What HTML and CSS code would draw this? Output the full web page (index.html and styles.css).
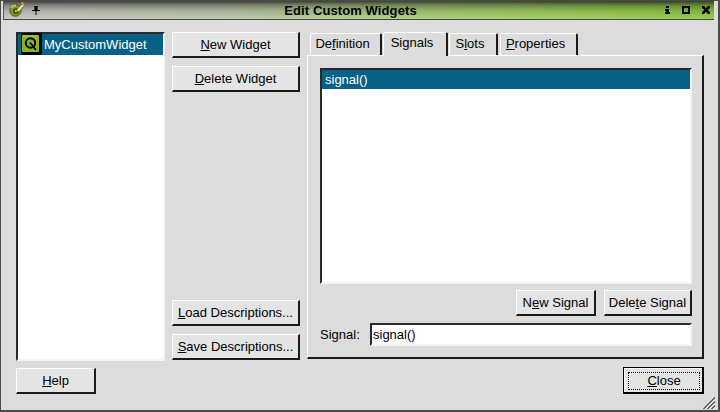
FILE: index.html
```html
<!DOCTYPE html>
<html lang="en">
<head>
<meta charset="utf-8">
<title>Edit Custom Widgets</title>
<link rel="stylesheet" href="styles.css">
</head>
<body>
<div class="window">
  <div class="titlebar">
    <svg class="app-icon" width="22" height="18" viewBox="0 0 22 18">
      <circle cx="8.500" cy="9.500" r="5.700" fill="#7f9f20" stroke="#44581a" stroke-width="1"/>
      <path d="M4 7A5 5 0 0 1 9 4.500" stroke="#c6dc6a" stroke-width="1.500" fill="none"/>
      <circle cx="9" cy="10" r="2.200" fill="#a8c040" stroke="#2c3a0c" stroke-width="1.300"/>
      <path d="M9.500 9L15 3L17.500 4.500L11.500 11Z" fill="#f2e6b0" stroke="#4a3a10" stroke-width=".6"/>
      <path d="M13.500 2.500L15.500 1L17.500 2.500L16 4Z" fill="#d8a020"/>
    </svg>
    <svg class="pin" width="8" height="9" viewBox="0 0 8 9">
      <path d="M2 0H6V1H5.500V4H8V5H4.500V9H3.500V5H0V4H2.500V1H2Z" fill="#000"/>
    </svg>
    <span class="title">Edit Custom Widgets</span>
    <div class="winbtns">
      <svg width="5" height="8" viewBox="0 0 5 8"><path d="M1 0H4V2H1ZM0 3H4V6H5V8H0V6H1V5H0Z" fill="#000"/></svg>
      <svg width="8" height="8" viewBox="0 0 8 8"><path d="M0 0H8V8H0ZM2 2V6H6V2Z" fill="#000" fill-rule="evenodd"/></svg>
      <svg width="8" height="8" viewBox="0 0 8 8"><path d="M0 0H2L4 2.300L6 0H8V2L5.700 4L8 6V8H6L4 5.700L2 8H0V6L2.300 4L0 2Z" fill="#000"/></svg>
    </div>
  </div>
  <div class="body">
    <div class="main">
      <div class="widget-list sunken">
        <div class="row selected">
          <svg class="qt" width="21" height="22" viewBox="0 0 21 22">
            <rect x="0" y="0" width="21" height="22" rx="2" fill="#000"/>
            <rect x="1" y="2" width="17" height="17" rx="1" fill="#8fb31a"/>
            <path d="M2 3H16" stroke="#b8d050" stroke-width="1"/>
            <circle cx="9.500" cy="10" r="4.700" fill="none" stroke="#000" stroke-width="2"/>
            <path d="M9 9.500L15 17" stroke="#000" stroke-width="2"/>
          </svg>
          <span class="row-text">MyCustomWidget</span>
        </div>
      </div>
      <div class="side-buttons">
        <button class="btn"><u>N</u>ew Widget</button>
        <button class="btn"><u>D</u>elete Widget</button>
        <div class="spacer"></div>
        <button class="btn"><u>L</u>oad Descriptions...</button>
        <button class="btn"><u>S</u>ave Descriptions...</button>
      </div>
      <div class="tabs">
        <div class="tabbar">
          <div class="tab tab-def">De<u>f</u>inition</div>
          <div class="tab tab-active">Si<u>g</u>nals</div>
          <div class="tab tab-slots">S<u>l</u>ots</div>
          <div class="tab tab-props"><u>P</u>roperties</div>
        </div>
        <div class="pane">
          <div class="signal-list sunken">
            <div class="signal-row">signal()</div>
          </div>
          <div class="signal-actions">
            <button class="btn btn-new">N<u>e</u>w Signal</button>
            <button class="btn btn-del">Dele<u>t</u>e Signal</button>
          </div>
          <div class="signal-field">
            <label class="signal-label">Si<u>g</u>nal:</label>
            <div class="input sunken">signal()</div>
          </div>
        </div>
      </div>
    </div>
    <div class="footer">
      <button class="btn btn-help"><u>H</u>elp</button>
      <button class="btn btn-close"><span class="focus"><u>C</u>lose</span></button>
    </div>
    <svg class="grip" width="14" height="14" viewBox="0 0 14 14">
      <path d="M13 1.500L1.500 13M13 5.500L5.500 13M13 9.500L9.500 13" stroke="#555" stroke-width="1.500" fill="none"/>
      <path d="M13 3.500L3.500 13M13 7.500L7.500 13M13 11.500L11.500 13" stroke="#fff" stroke-width=".9" fill="none"/>
    </svg>
  </div>
</div>
</body>
</html>
```
FILE: styles.css
```css
* { box-sizing: border-box; }
html, body { margin: 0; padding: 0; }
body {
  width: 720px;
  height: 412px;
  overflow: hidden;
  font-family: "Liberation Sans", Arial, sans-serif;
  font-size: 13px;
  color: #000;
  background: #dcdcdc;
}
.window {
  position: relative;
  width: 720px;
  height: 412px;
  display: flex;
  flex-direction: column;
  background: #dcdcdc;
  border: 1px solid #4a4a4a;
  border-right-width: 2px;
  border-bottom-width: 2px;
  padding: 0 2px;
}
.titlebar {
  position: relative;
  flex: none;
  height: 19px;
  margin-right: 2px;
  display: flex;
  align-items: center;
  background:
    linear-gradient(to bottom, rgba(30,30,30,.8) 0, rgba(40,40,40,.4) 25%, rgba(60,60,60,.15) 55%, rgba(255,255,255,.12) 100%),
    linear-gradient(to right, #c4c4c0 0%, #b8c4a8 30%, #a8cc78 55%, #98cc50 80%, #8cc83a 100%);
  border-bottom: 1px solid #444;
  border-left: 1px solid #555;
}
.app-icon { flex: none; margin-left: 3px; }
.pin { flex: none; margin-left: 3px; }
.title {
  position: absolute;
  left: 0;
  right: 0;
  padding-right: 17px;
  text-align: center;
  font-weight: bold;
  font-size: 13px;
  letter-spacing: .1px;
  color: #000;
}
.winbtns {
  position: relative;
  margin-left: auto;
  display: flex;
  align-items: center;
  gap: 12px;
  padding-right: 4px;
}
.body {
  position: relative;
  flex: 1;
  min-height: 0;
  display: flex;
  flex-direction: column;
  padding: 12px 12px 16px 13px;
}
.main {
  flex: none;
  height: 329px;
  display: flex;
}
.sunken {
  background: #fff;
  border: 2px solid;
  border-color: #2a2a2a #f4f4f4 #f4f4f4 #2a2a2a;
}
.widget-list {
  flex: none;
  width: 149px;
}
.row {
  display: flex;
  align-items: center;
  height: 21px;
  padding-left: 3px;
}
.selected { background: #076186; color: #fff; }
.qt { flex: none; margin: -1px 2px 0 0; }
.row-text { margin-bottom: 1px; }
.side-buttons {
  flex: none;
  width: 128px;
  margin-left: 7px;
  padding-bottom: 1px;
  display: flex;
  flex-direction: column;
  gap: 8px;
}
.spacer { flex: 1; }
.btn {
  display: block;
  height: 26px;
  padding: 0;
  font: inherit;
  color: #000;
  background: #e4e4e4;
  border: 1px solid;
  border-color: #fff #1a1a1a #1a1a1a #fff;
  border-width: 1px 2px 2px 1px;
  text-align: center;
}
.tabs {
  flex: 1;
  min-width: 0;
  margin-left: 7px;
  padding-bottom: 2px;
  display: flex;
  flex-direction: column;
}
.tabbar {
  flex: none;
  height: 23px;
  display: flex;
  align-items: flex-end;
  padding-left: 3px;
  gap: 1px;
  position: relative;
  z-index: 1;
}
.tab {
  height: 22px;
  line-height: 20px;
  padding-right: 6px;
  text-align: center;
  background: #dcdcdc;
  border: 1px solid;
  border-color: #fff #1a1a1a transparent #fff;
  border-width: 1px 2px 0 1px;
  border-radius: 2px 2px 0 0;
}
.tab-def { width: 72px; }
.tab-active {
  width: 65px;
  height: 24px;
  line-height: 19px;
  margin-bottom: -1px;
}
.tab-slots { width: 49px; }
.tab-props { width: 78px; margin-left: 1px; }
.pane {
  flex: 1;
  min-height: 0;
  display: flex;
  flex-direction: column;
  padding: 12px 10px 12px 12px;
  border: 1px solid;
  border-color: #fff #1a1a1a #1a1a1a #fff;
  border-width: 1px 2px 2px 1px;
}
.signal-list {
  flex: none;
  height: 216px;
}
.signal-row {
  height: 19px;
  line-height: 19px;
  padding-left: 3px;
  background: #076186;
  color: #fff;
}
.signal-actions {
  flex: none;
  display: flex;
  justify-content: flex-end;
  gap: 8px;
  margin-top: 6px;
}
.btn-new { width: 80px; }
.btn-del { width: 88px; }
.signal-field {
  flex: none;
  display: flex;
  align-items: center;
  margin-top: 7px;
}
.signal-label { flex: none; width: 50px; }
.input {
  flex: 1;
  height: 23px;
  line-height: 19px;
  padding-left: 1px;
}
.footer {
  flex: none;
  display: flex;
  justify-content: space-between;
  margin-top: 7px;
}
.btn-help { width: 80px; }
.btn-close {
  width: 81px;
  height: 27px;
  margin-top: -1px;
  border-color: #000;
  padding: 4px 2px 2px 4px;
  box-shadow: inset 1px 1px 0 #fff;
}
.focus {
  display: block;
  height: 18px;
  line-height: 15px;
  border: 1px dotted #000;
}
.grip {
  position: absolute;
  right: 0;
  bottom: 0;
}
```
